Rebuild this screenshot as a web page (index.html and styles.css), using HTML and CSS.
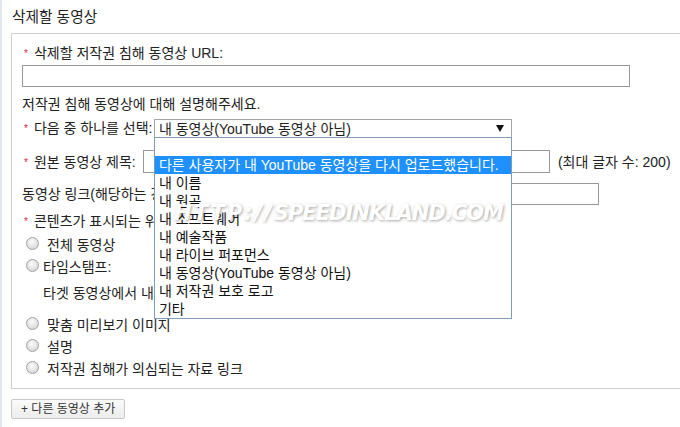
FILE: index.html
```html
<!DOCTYPE html>
<html lang="ko">
<head>
<meta charset="utf-8">
<title>삭제할 동영상</title>
<link rel="stylesheet" href="styles.css">
</head>
<body>
<div class="page">
  <h1 class="title">삭제할 동영상</h1>
  <div class="box">
    <div class="line text-line"><span class="req">*</span>삭제할 저작권 침해 동영상 URL:</div>
    <div class="input url"></div>
    <div class="line text-line desc">저작권 침해 동영상에 대해 설명해주세요.</div>
    <div class="line sel-row">
      <span class="req">*</span><span class="sel-label">다음 중 하나를 선택:</span>
      <div class="select">
        <span class="sel-text">내 동영상(YouTube 동영상 아님)</span>
        <span class="arrow"></span>
        <div class="dropdown">
          <div class="opt"></div>
          <div class="opt active">다른 사용자가 내 YouTube 동영상을 다시 업로드했습니다.</div>
          <div class="opt">내 이름</div>
          <div class="opt">내 원곡</div>
          <div class="opt">내 소프트웨어</div>
          <div class="opt">내 예술작품</div>
          <div class="opt">내 라이브 퍼포먼스</div>
          <div class="opt">내 동영상(YouTube 동영상 아님)</div>
          <div class="opt">내 저작권 보호 로고</div>
          <div class="opt">기타</div>
        </div>
      </div>
    </div>
    <div class="line field-row title-row">
      <span class="req">*</span><span class="title-label">원본 동영상 제목:</span>
      <div class="input title-input"></div>
      <span class="hint">(최대 글자 수: 200)</span>
    </div>
    <div class="line field-row link-row">
      <span class="link-label">동영상 링크(해당하는 경우):</span>
      <div class="input link-input"></div>
    </div>
    <div class="line text-line where"><span class="req">*</span>콘텐츠가 표시되는 위치:</div>
    <div class="radio-row first"><span class="radio"></span><span class="rlabel">전체 동영상</span></div>
    <div class="radio-row"><span class="radio"></span><span class="rlabel tight">타임스탬프:</span></div>
    <div class="line text-line target">타겟 동영상에서 내 콘텐츠가 표시되는 시간</div>
    <div class="radio-row thumb"><span class="radio"></span><span class="rlabel">맞춤 미리보기 이미지</span></div>
    <div class="radio-row"><span class="radio"></span><span class="rlabel">설명</span></div>
    <div class="radio-row"><span class="radio"></span><span class="rlabel">저작권 침해가 의심되는 자료 링크</span></div>
  </div>
  <button class="add-btn" type="button">+ 다른 동영상 추가</button>
</div>
<div class="watermark"><span class="wm-proto">HTTP://</span>SPEEDINKLAND.COM</div>
</body>
</html>
```

FILE: styles.css
```css
html, body {
  margin: 0;
  padding: 0;
  background: #fff;
  overflow: hidden;
}
body {
  font-family: "Liberation Sans", "Noto Sans CJK KR", sans-serif;
  font-size: 14px;
  color: #222;
  border-left: 2px solid #e4e8f1;
  height: 427px;
  box-sizing: border-box;
  position: relative;
}
.page {
  padding-left: 9px;
}
.title {
  margin: 0 0 7px 1px;
  padding-top: 8px;
  font-size: 14.7px;
  font-weight: normal;
  line-height: 18px;
  color: #222;
}
.box {
  border: 1px solid #cfcfcf;
  border-right: none;
  width: 700px;
  padding: 9px 0 10px 10px;
}
.line {
  height: 18px;
  line-height: 18px;
  display: flex;
  align-items: center;
  white-space: nowrap;
}
.text-line {
  box-sizing: border-box;
  padding-top: 2px;
}
.req {
  color: #d23;
  font-size: 10px;
  margin: 0 6px 0 2px;
  position: relative;
  top: 1px;
}
.input {
  box-sizing: border-box;
  border: 1px solid #999;
  background: #fff;
}
.url {
  margin-top: 4px;
  width: 608px;
  height: 22px;
}
.desc {
  margin-top: 7px;
}
.sel-row {
  margin-top: 7px;
}
.sel-label {
  width: 120px;
  flex: none;
}
.select {
  position: relative;
  box-sizing: border-box;
  width: 358px;
  height: 18px;
  border: 1px solid #a6a6a6;
  border-bottom: none;
  display: flex;
  align-items: center;
  justify-content: space-between;
  padding: 0 7px 0 4px;
  background: #fff;
}
.arrow {
  width: 0;
  height: 0;
  border-left: 4px solid transparent;
  border-right: 4px solid transparent;
  border-top: 7px solid #111;
}
.dropdown {
  position: absolute;
  top: 17px;
  left: -1px;
  width: 358px;
  box-sizing: border-box;
  border: 1px solid #7f9db9;
  background: #fff;
  z-index: 10;
}
.opt {
  height: 18px;
  line-height: 18px;
  padding-left: 4px;
  color: #111;
  white-space: nowrap;
}
.opt.active {
  background: #1e90ff;
  color: #fff;
}
.field-row {
  height: 23px;
}
.title-row {
  margin-top: 13px;
}
.title-label {
  width: 109px;
  flex: none;
}
.title-input {
  width: 407px;
  height: 23px;
}
.hint {
  margin-left: 8px;
}
.link-row {
  margin-top: 10px;
  height: 22px;
}
.link-label {
  width: 150px;
  flex: none;
}
.link-input {
  width: 427px;
  height: 22px;
}
.where {
  margin-top: 6px;
}
.radio-row {
  height: 22px;
  display: flex;
  align-items: center;
  white-space: nowrap;
}
.radio-row.first {
  margin-top: 3px;
}
.radio-row.thumb {
  margin-top: 11px;
}
.radio {
  box-sizing: border-box;
  width: 13px;
  height: 13px;
  margin-left: 4px;
  border-radius: 50%;
  border: 1px solid #a2a2a2;
  background: radial-gradient(circle at 45% 35%, #fbfbfb 0%, #e2e2e2 55%, #c9c9c9 100%);
  flex: none;
}
.rlabel {
  margin-left: 8px;
  position: relative;
  top: 1px;
}
.rlabel.tight {
  margin-left: 4px;
}
.target {
  margin-top: 7px;
  padding-left: 21px;
}
.add-btn {
  margin-top: 10px;
  height: 20px;
  padding: 0 9px;
  border: 1px solid #c8c8c8;
  border-radius: 2px;
  background: linear-gradient(#fbfbfb, #ececec);
  font-family: "Liberation Sans", "Noto Sans CJK KR", sans-serif;
  font-size: 12px;
  color: #333;
  line-height: 18px;
}
.watermark {
  position: absolute;
  left: 172px;
  top: 203px;
  font-family: "DejaVu Sans", sans-serif;
  font-weight: bold;
  font-style: italic;
  font-size: 21px;
  line-height: 21px;
  letter-spacing: -1px;
  color: #fff;
  text-shadow: 1px 1px 3px rgba(0, 0, 0, 0.35);
  z-index: 20;
  white-space: nowrap;
  pointer-events: none;
}
.wm-proto {
  letter-spacing: 2px;
}
```
